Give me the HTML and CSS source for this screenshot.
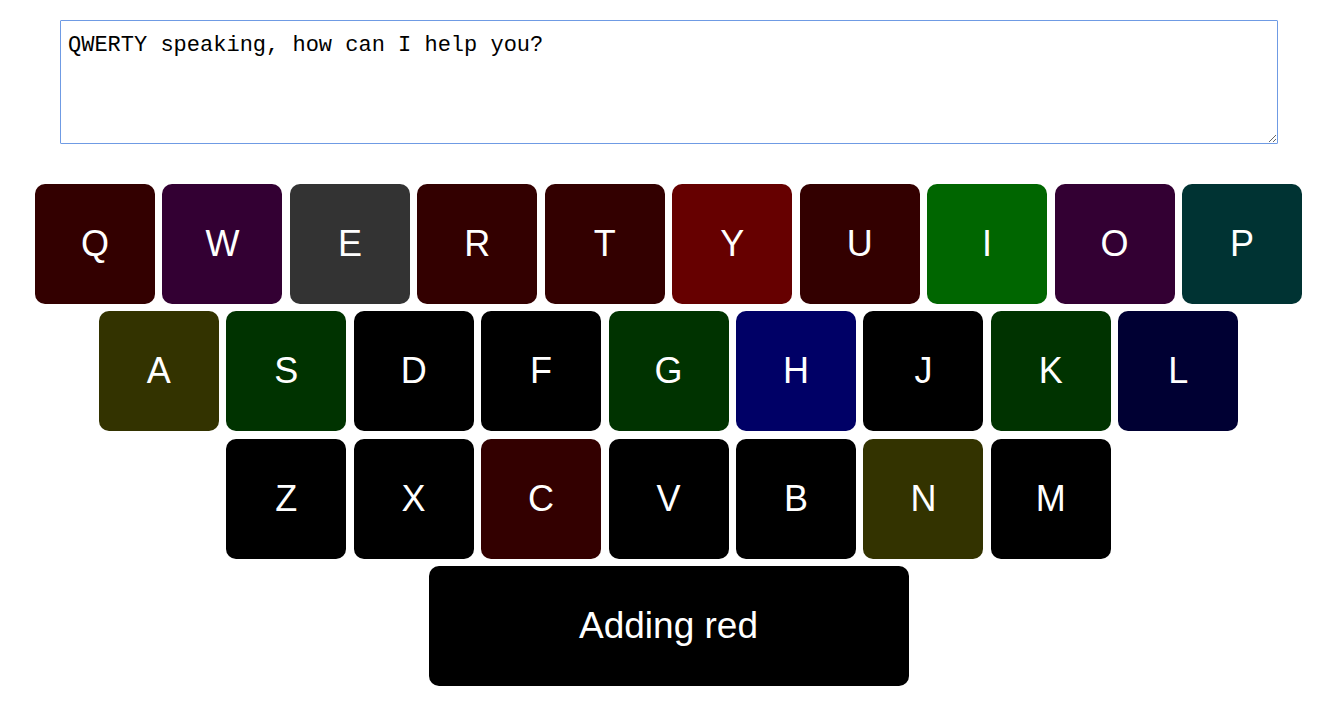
FILE: index.html
```html
<!DOCTYPE html>
<html>
<head>
<meta charset="utf-8">
<link rel="stylesheet" href="styles.css">
</head>
<body>
<div class="page">
  <textarea class="output">QWERTY speaking, how can I help you?</textarea>
  <div class="keyboard">
    <div class="row">
      <div class="key c-300">Q</div>
      <div class="key c-303">W</div>
      <div class="key c-333">E</div>
      <div class="key c-300">R</div>
      <div class="key c-300">T</div>
      <div class="key c-600">Y</div>
      <div class="key c-300">U</div>
      <div class="key c-060">I</div>
      <div class="key c-303">O</div>
      <div class="key c-033">P</div>
    </div>
    <div class="row">
      <div class="key c-330">A</div>
      <div class="key c-030">S</div>
      <div class="key c-000">D</div>
      <div class="key c-000">F</div>
      <div class="key c-030">G</div>
      <div class="key c-006">H</div>
      <div class="key c-000">J</div>
      <div class="key c-030">K</div>
      <div class="key c-003">L</div>
    </div>
    <div class="row">
      <div class="key c-000">Z</div>
      <div class="key c-000">X</div>
      <div class="key c-300">C</div>
      <div class="key c-000">V</div>
      <div class="key c-000">B</div>
      <div class="key c-330">N</div>
      <div class="key c-000">M</div>
    </div>
    <div class="row">
      <div class="key space c-000">Adding red</div>
    </div>
  </div>
</div>
</body>
</html>
```
FILE: styles.css
```css
html, body {
  margin: 0;
  padding: 0;
  background: #ffffff;
}

.page {
  padding-top: 20px;
}

.output {
  display: block;
  box-sizing: border-box;
  width: 1218px;
  height: 124px;
  margin: 0 auto;
  padding: 12px 7px 9px;
  border: 1px solid #6f9be4;
  outline: none;
  border-radius: 1px;
  font-family: "Liberation Mono", "DejaVu Sans Mono", monospace;
  font-size: 22px;
  line-height: 26px;
  color: #000;
  resize: both;
}

.keyboard {
  margin-top: 40px;
  display: flex;
  flex-direction: column;
  gap: 7.4px;
}

.row {
  display: flex;
  justify-content: center;
  gap: 7.44px;
  padding-right: 1px;
}

.key {
  width: 120px;
  height: 120px;
  border-radius: 10px;
  display: flex;
  align-items: center;
  justify-content: center;
  color: #ffffff;
  font-family: "Liberation Sans", Arial, sans-serif;
  font-size: 36px;
}

.key.space {
  width: 480px;
  font-size: 37px;
}

.c-300 { background: #330000; }
.c-303 { background: #330033; }
.c-333 { background: #333333; }
.c-600 { background: #660000; }
.c-060 { background: #006600; }
.c-033 { background: #003333; }
.c-330 { background: #333300; }
.c-030 { background: #003300; }
.c-000 { background: #000000; }
.c-006 { background: #000066; }
.c-003 { background: #000033; }
```
